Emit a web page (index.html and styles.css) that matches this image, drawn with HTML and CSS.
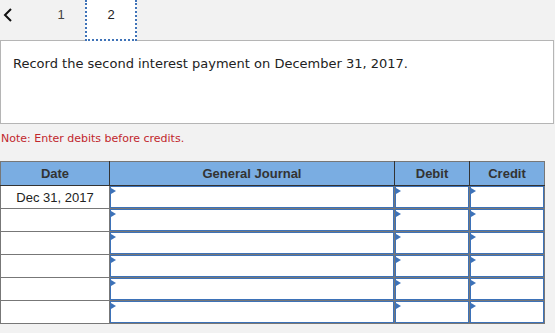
FILE: index.html
```html
<!DOCTYPE html>
<html lang="en">
<head>
  <meta charset="UTF-8" />
  <title>Journal Entry</title>
  <link rel="stylesheet" href="styles.css">
</head>
<body>
  <!-- Tabs -->
  <div class="tabs">
    <button class="tab-back" aria-label="Previous">
      <svg width="10" height="14" viewBox="0 0 10 14"><path d="M8 1 L2 7 L8 13" fill="none" stroke="#111" stroke-width="2"/></svg>
    </button>
    <div class="tab">1</div>
    <div class="tab active">2</div>
  </div>

  <div class="question">
    Record the second interest payment on December 31, 2017.
  </div>

  <p class="note">Note: Enter debits before credits.</p>

  <table class="journal">
    <thead>
      <tr>
        <th class="col-date">Date</th>
        <th class="col-gj">General Journal</th>
        <th class="col-amt">Debit</th>
        <th class="col-amt">Credit</th>
      </tr>
    </thead>
    <tbody id="rows"></tbody>
  </table>

  <script>
    const rows = document.getElementById('rows');
    for (let i = 0; i < 6; i++) {
      const tr = document.createElement('tr');
      const date = i === 0 ? 'Dec 31, 2017' : '';
      tr.innerHTML = `
        <td class="date">${date}</td>
        <td><div class="entry"></div></td>
        <td><div class="entry"></div></td>
        <td><div class="entry"></div></td>`;
      rows.appendChild(tr);
    }
  </script>
</body>
</html>
```

FILE: styles.css
```css
body {
  margin: 0;
  padding: 0;
  background-color: #f2f2f2;
  font-family: "Liberation Sans", Arial, sans-serif;
  color: #222;
}
.tabs {
  display: flex;
  align-items: stretch;
  height: 40px;
}
.tab-back {
  width: 18px;
  padding: 0 0 0 3px;
  margin-right: 17px;
  border: none;
  background: none;
  display: flex;
  align-items: flex-start;
  padding-top: 8px;
}
.tab {
  width: 52px;
  box-sizing: border-box;
  text-align: center;
  font-size: 13px;
  line-height: 30px;
  color: #444;
}
.tab.active {
  position: relative;
  height: 41px;
  margin-left: -2px;
  background: white;
  color: #222;
  border: 2px dotted #3f73b8;
  border-top: none;
  line-height: 30px;
}
.question {
  background: white;
  border: 1px solid #b5b5b5;
  height: 82px;
  margin-right: 1px;
  padding: 0 12px;
  font-family: "DejaVu Sans", Verdana, sans-serif;
  font-size: 13px;
  line-height: 46px;
  color: #222;
}
.note {
  margin: 8px 0 0 1px;
  height: 29px;
  font-family: "DejaVu Sans", Verdana, sans-serif;
  font-size: 11px;
  color: #c1272d;
}
.journal {
  border-collapse: collapse;
  width: 545px;
  font-size: 13px;
}
.journal th {
  background: #7aade2;
  color: #333;
  font-weight: bold;
  height: 23px;
  padding: 0;
  border: 1px solid #333;
  border-top-color: #777;
}
.journal th:first-child { border-left-color: #777; }
.journal th:last-child { border-right-color: #777; }
.col-date { width: 108px; }
.col-gj { width: 284px; }
.col-amt { width: 74px; }
.journal td {
  background: white;
  border: 1px solid #777;
  height: 22px;
  padding: 0;
}
.journal td.date {
  text-align: center;
  color: #222;
}
.entry {
  position: relative;
  height: 22px;
  box-sizing: border-box;
  border: 1px solid #3d72b8;
}
.entry::before {
  content: "";
  position: absolute;
  left: 0;
  top: 1px;
  border-left: 5px solid #3d72b8;
  border-top: 3px solid transparent;
  border-bottom: 3px solid transparent;
}
```
